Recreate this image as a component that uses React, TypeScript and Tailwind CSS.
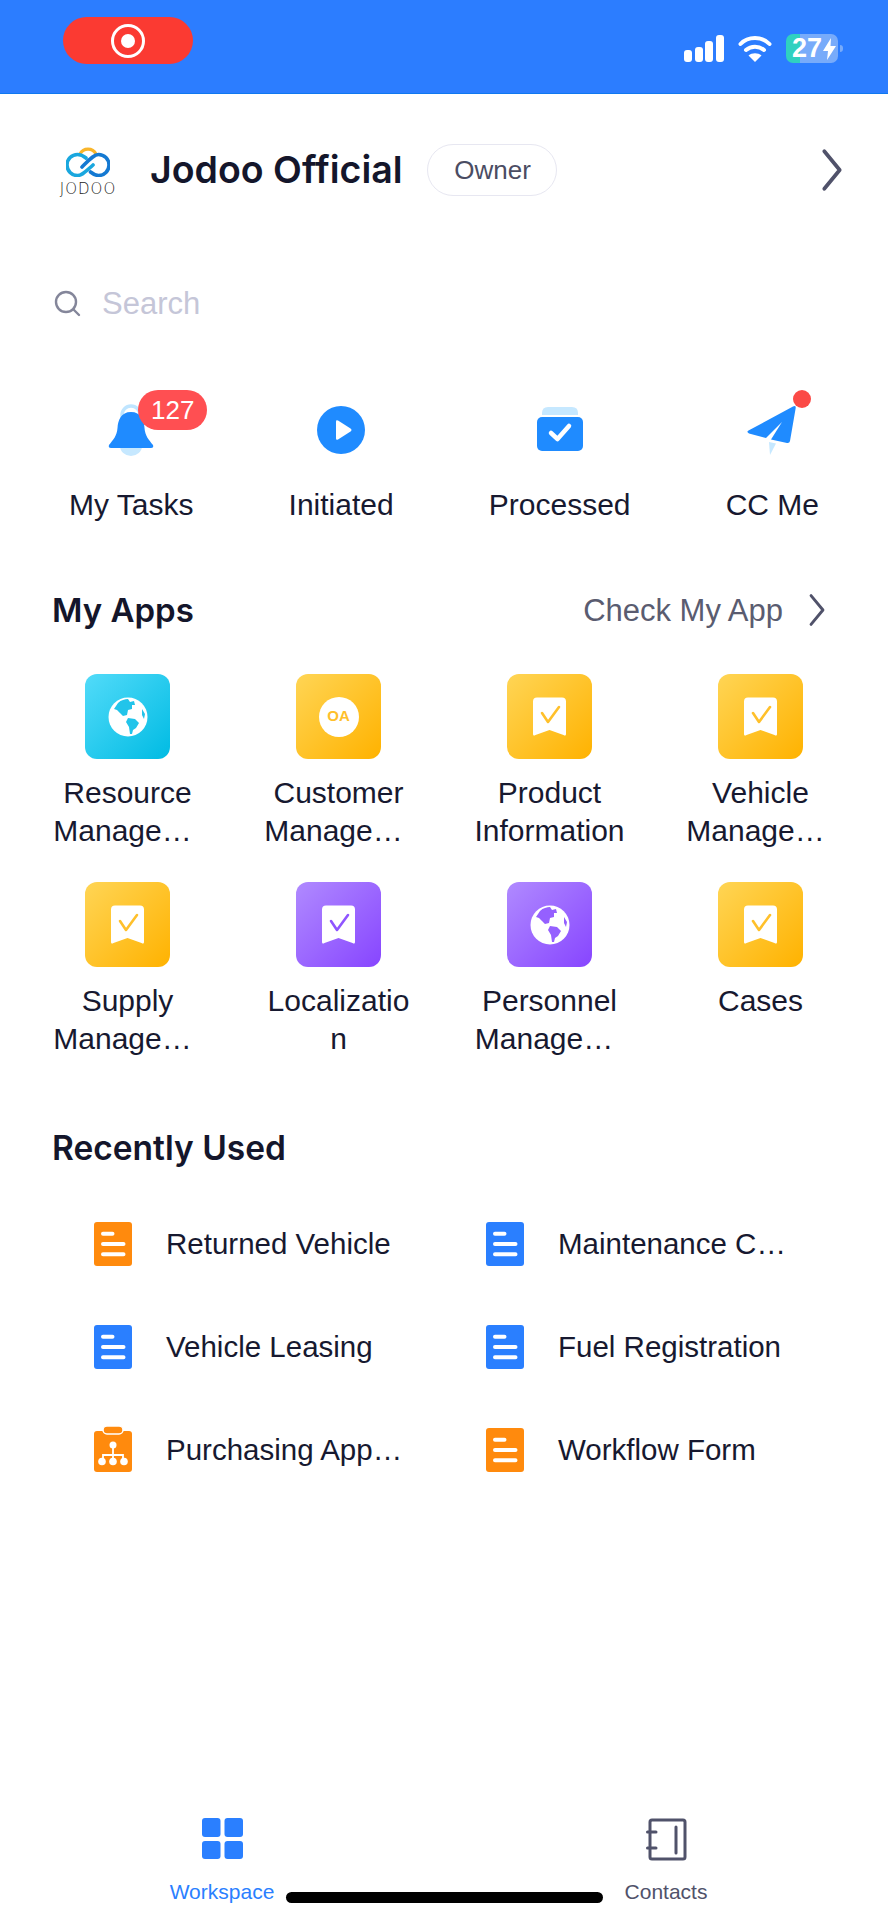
import React from "react";

const Chevron = ({ className }: { className: string }) => (
  <svg className={className} viewBox="0 0 20 40" fill="none">
    <path d="M3 3 L17 20 L3 37" stroke="#50526a" strokeWidth="3.4" strokeLinecap="round" strokeLinejoin="round" />
  </svg>
);

const Globe = ({ color }: { color: string }) => (
  <svg className="w-[40px] h-[40px]" viewBox="0 0 40 40">
    <circle cx="20" cy="20" r="19.5" fill="#fff" />
    <path
      d="M10 6 C13 3 17 2 20 2 L22 5 L26 4 L27 8 L24 8 L24 12 L20 13 L19 18 L15 19 L12 16 L9 13 L6 12 Z"
      fill={color}
    />
    <path d="M20 21 L27 22 L31 26 L28 31 L25 33 L24 37 L22 37 L21 30 L18 25 Z" fill={color} />
    <path d="M34 12 L37 17 L36 22 L34 18 Z" fill={color} />
  </svg>
);

const Bookmark = ({ color }: { color: string }) => (
  <svg className="w-[33px] h-[40px]" viewBox="0 0 33 40">
    <path
      d="M4 0.5 H29 a4 4 0 0 1 4 4 V37 q0 2.5 -2.5 1 L16.5 33 L2.5 38 q-2.5 1.5 -2.5 -1 V4.5 a4 4 0 0 1 4 -4 z"
      fill="#fff"
    />
    <path d="M9 16 L15 25 L26 10" fill="none" stroke={color} strokeWidth="2.6" strokeLinecap="round" strokeLinejoin="round" />
  </svg>
);

const DocIcon = ({ color }: { color: string }) => (
  <svg className="w-[38px] h-[44px]" viewBox="0 0 38 44">
    <rect width="38" height="44" rx="3" fill={color} />
    <path d="M9 11.7 H18.5 M9 22 H29.5 M9 32.3 H29.5" stroke="#fff" strokeWidth="4" strokeLinecap="round" />
  </svg>
);

const OrgIcon = () => (
  <svg className="w-[38px] h-[44px] overflow-visible" viewBox="0 0 38 44">
    <path d="M3 3 H35 a3 3 0 0 1 3 3 V41 a3 3 0 0 1 -3 3 H3 a3 3 0 0 1 -3 -3 V6 a3 3 0 0 1 3 -3 z" fill="#ff8a0d" />
    <rect x="9" y="-2" width="20" height="8" rx="4" fill="#ff8a0d" stroke="#fff" strokeWidth="1.5" />
    <path d="M19 18 V32 M9 32 V27 H29 V32" fill="none" stroke="#fff" strokeWidth="1.8" />
    <circle cx="19" cy="17" r="3.5" fill="#fff" />
    <circle cx="8" cy="33.5" r="3.8" fill="#fff" />
    <circle cx="19" cy="33.5" r="3.8" fill="#fff" />
    <circle cx="30" cy="33.5" r="3.8" fill="#fff" />
  </svg>
);

const gradients = {
  cyan: "bg-[linear-gradient(135deg,#52dbf9,#00bbe3)]",
  amber: "bg-[linear-gradient(135deg,#ffd555,#ffb200)]",
  purple: "bg-[linear-gradient(135deg,#b08aff,#8745ff)]",
};

const apps = [
  { tone: "cyan", kind: "globe", color: "#22c4ea", lines: ["Resource", "Manage…"], pad: "pr-[10px]" },
  { tone: "amber", kind: "oa", color: "#ffc02b", lines: ["Customer", "Manage…"], pad: "pr-[10px]" },
  { tone: "amber", kind: "mark", color: "#ffc02b", lines: ["Product", "Information"], pad: "" },
  { tone: "amber", kind: "mark", color: "#ffc02b", lines: ["Vehicle", "Manage…"], pad: "pr-[10px]" },
  { tone: "amber", kind: "mark", color: "#ffc02b", lines: ["Supply", "Manage…"], pad: "pr-[10px]" },
  { tone: "purple", kind: "mark", color: "#8f55ff", lines: ["Localizatio", "n"], pad: "" },
  { tone: "purple", kind: "globe", color: "#9560ff", lines: ["Personnel", "Manage…"], pad: "pr-[11px]" },
  { tone: "amber", kind: "mark", color: "#ffc02b", lines: ["Cases"], pad: "" },
] as const;

const recents = [
  { label: "Returned Vehicle", icon: <DocIcon color="#ff8a0d" /> },
  { label: "Maintenance C…", icon: <DocIcon color="#2a7fff" /> },
  { label: "Vehicle Leasing", icon: <DocIcon color="#2a7fff" /> },
  { label: "Fuel Registration", icon: <DocIcon color="#2a7fff" /> },
  { label: "Purchasing App…", icon: <OrgIcon /> },
  { label: "Workflow Form", icon: <DocIcon color="#ff8a0d" /> },
];

const App = () => {
  return (
    <div className="relative w-[888px] h-[1920px] bg-white overflow-hidden flex flex-col font-['Liberation_Sans',Arial,sans-serif] text-[#171930]">
      {/* status bar */}
      <div className="h-[94px] shrink-0 bg-[#2c7dff] border-b border-[#0f78f0] flex items-start">
        <div className="ml-[63px] mt-[17px] w-[130px] h-[47px] rounded-full bg-[#fb3a32] flex items-center justify-center">
          <div className="w-[34px] h-[34px] rounded-full border-[3px] border-white flex items-center justify-center">
            <div className="w-[14px] h-[14px] rounded-full bg-white" />
          </div>
        </div>
        <div className="ml-auto mr-[45px] mt-[34px] flex items-center gap-[14px]">
          <svg className="w-[40px] h-[27px]" viewBox="0 0 40 27" fill="#fff">
            <rect x="0" y="15" width="8" height="12" rx="3" />
            <rect x="11" y="12" width="8" height="15" rx="3" />
            <rect x="21" y="6" width="8" height="21" rx="3" />
            <rect x="32" y="0" width="8" height="27" rx="3" />
          </svg>
          <svg className="w-[34px] h-[27px]" viewBox="0 0 34 27" fill="none">
            <path d="M2.5 9 C10 1 24 1 31.5 9" stroke="#fff" strokeWidth="4" strokeLinecap="round" />
            <path d="M8 15 C13 10.5 21 10.5 26 15" stroke="#fff" strokeWidth="4" strokeLinecap="round" />
            <path d="M17 27 L10.5 20.5 C14 17.5 20 17.5 23.5 20.5 Z" fill="#fff" />
          </svg>
          <div className="flex items-center gap-[2px]">
            <div className="w-[52px] h-[29px] rounded-[7px] bg-[linear-gradient(90deg,#2fd1c0_27%,#78abfa_27%)] flex items-center pl-[6px] gap-[1px] text-white font-bold text-[27px] leading-none">
              <span>27</span>
              <svg className="w-[13px] h-[22px]" viewBox="0 0 13 22" fill="#fff">
                <path d="M8 0 L0 13 H5 L4 22 L13 8 H7.5 Z" />
              </svg>
            </div>
            <div className="w-[3px] h-[7px] rounded-r bg-[#78abfa]" />
          </div>
        </div>
      </div>

      {/* team header */}
      <div className="mt-[50px] h-[52px] pl-[60px] pr-[44px] flex items-center">
        <div className="w-[56px] flex flex-col items-center">
          <svg className="w-[44px] h-[33px]" viewBox="0 0 44 33" fill="none">
            <path d="M14 10 A9 9 0 0 1 30 10" stroke="#f9b52a" strokeWidth="3.2" />
            <path d="M20 14 C17 11.5 14 10.5 11.5 10.5 A10.5 10.5 0 0 0 11.5 31.5 C16 31.5 19 28 27 21" stroke="#1aa7de" strokeWidth="3.6" strokeLinecap="round" />
            <path d="M16 23 C24 15 28 10.5 32.5 10.5 A10.5 10.5 0 0 1 32.5 31.5 C29.5 31.5 27 30 24.5 28" stroke="#1479d2" strokeWidth="3.6" strokeLinecap="round" />
          </svg>
          <span className="mt-[5px] text-[15px] leading-[14px] tracking-[1px] font-['DejaVu_Sans',sans-serif] font-extralight text-[#222]">
            JODOO
          </span>
        </div>
        <h1 className="ml-[34px] font-['Inter',sans-serif] font-semibold text-[37.5px] leading-none whitespace-nowrap text-[#14162b]">
          Jodoo Official
        </h1>
        <span className="ml-[24px] w-[130px] h-[52px] rounded-full border-[1.5px] border-[#e7e7f1] flex items-center justify-center pl-[2px] text-[26px] text-[#4b4d63]">
          Owner
        </span>
        <Chevron className="ml-auto w-[24px] h-[44px]" />
      </div>

      {/* search */}
      <div className="mt-[87px] h-[40px] pl-[54px] flex items-center gap-[21px]">
        <svg className="w-[27px] h-[27px]" viewBox="0 0 27 27" fill="none">
          <circle cx="12" cy="12" r="10" stroke="#84869a" strokeWidth="2.4" />
          <path d="M19.5 19.5 L25 25" stroke="#84869a" strokeWidth="2.4" strokeLinecap="round" />
        </svg>
        <span className="text-[31px] leading-none text-[#c5c6d8]">Search</span>
      </div>

      {/* shortcuts */}
      <div className="mt-[67px] px-[69px] flex justify-between">
        <div className="flex flex-col items-center">
          <div className="relative h-[66px] w-[46px] flex items-end">
            <svg className="w-[46px] h-[53px]" viewBox="0 0 46 53">
              <circle cx="23" cy="12" r="9" fill="none" stroke="#bfe5ff" strokeWidth="3.5" />
              <ellipse cx="23" cy="43" rx="11" ry="10" fill="#c6e8ff" />
              <path d="M23 9 C13 9 10 17 9.5 25 C9 33 5 37 1 42 Q0 45 3 45 H43 Q46 45 45 42 C41 37 37 33 36.5 25 C36 17 33 9 23 9 Z" fill="#1f8bff" />
            </svg>
            <span className="absolute left-[30px] top-0 w-[69px] h-[40px] rounded-full bg-[#ff4f52] text-white text-[26px] leading-[40px] text-center">
              127
            </span>
          </div>
          <span className="mt-[29px] text-[30px] leading-[40px] whitespace-nowrap">My Tasks</span>
        </div>
        <div className="flex flex-col items-center">
          <div className="h-[66px] flex items-start pt-[16px]">
            <svg className="w-[48px] h-[48px]" viewBox="0 0 48 48">
              <circle cx="24" cy="24" r="24" fill="#1f8bff" />
              <path d="M19 15.5 Q19 13.5 21 14.5 L33.5 22.5 Q35.5 24 33.5 25.5 L21 33.5 Q19 34.5 19 32.5 Z" fill="#fff" />
            </svg>
          </div>
          <span className="mt-[29px] text-[30px] leading-[40px] whitespace-nowrap">Initiated</span>
        </div>
        <div className="flex flex-col items-center">
          <div className="h-[66px] flex items-start pt-[17px]">
            <svg className="w-[46px] h-[46px]" viewBox="0 0 46 46">
              <path d="M5 6 Q5 0 11 0 H35 Q41 0 41 6 V8 H5 Z" fill="#c6e8ff" />
              <rect x="0" y="10" width="46" height="34" rx="5" fill="#1f8bff" />
              <path d="M14 26 L20.5 32 L32 19" fill="none" stroke="#fff" strokeWidth="4.5" strokeLinecap="round" strokeLinejoin="round" />
            </svg>
          </div>
          <span className="mt-[29px] text-[30px] leading-[40px] whitespace-nowrap">Processed</span>
        </div>
        <div className="flex flex-col items-center">
          <div className="relative h-[66px] w-[50px] flex items-end">
            <svg className="w-[50px] h-[52px]" viewBox="0 0 50 52">
              <path d="M46 2.5 Q49 1 48.7 4 L43 37 Q42.5 39.5 40 39 L24 35.5 L35 18 L19 34 L2 29.5 Q-1 28 1.5 26.5 Z" fill="#1f8bff" />
              <path d="M22 38 L29 39.5 L23 51 Z" fill="#c6e8ff" />
            </svg>
            <span className="absolute left-[46px] top-0 w-[18px] h-[18px] rounded-full bg-[#fb4a46]" />
          </div>
          <span className="mt-[29px] text-[30px] leading-[40px] whitespace-nowrap">CC Me</span>
        </div>
      </div>

      {/* my apps */}
      <div className="mt-[65px] h-[40px] pl-[52px] pr-[62px] flex items-center">
        <h2 className="font-['Inter',sans-serif] font-semibold text-[33px] leading-none text-[#14162b]">My Apps</h2>
        <span className="ml-auto text-[31px] leading-none text-[#5a5c70]">Check My App</span>
        <Chevron className="ml-[25px] w-[18px] h-[34px]" />
      </div>

      <div className="mt-[44px] px-[22px] grid grid-cols-4 gap-y-[32px]">
        {apps.map((app, i) => (
          <div key={i} className="h-[176px] flex flex-col items-center">
            <div className={`w-[85px] h-[85px] rounded-[12px] flex items-center justify-center ${gradients[app.tone]}`}>
              {app.kind === "globe" && <Globe color={app.color} />}
              {app.kind === "mark" && <Bookmark color={app.color} />}
              {app.kind === "oa" && (
                <div className="w-[40px] h-[40px] rounded-full bg-white flex items-center justify-center text-[15px] font-bold text-[#ffc02b]">
                  OA
                </div>
              )}
            </div>
            <div className="mt-[15px] text-[30px] leading-[38px] text-center whitespace-nowrap">
              <div>{app.lines[0]}</div>
              {app.lines[1] && <div className={app.pad}>{app.lines[1]}</div>}
            </div>
          </div>
        ))}
      </div>

      {/* recently used */}
      <div className="mt-[71px] h-[40px] pl-[52px] flex items-center">
        <h2 className="font-['Inter',sans-serif] font-semibold text-[33.5px] leading-none text-[#14162b]">Recently Used</h2>
      </div>
      <div className="mt-[53px] pl-[94px] grid grid-cols-[392px_1fr] gap-y-[59px]">
        {recents.map((r) => (
          <div key={r.label} className="h-[44px] flex items-center gap-[34px]">
            {r.icon}
            <span className="text-[29.5px] leading-none whitespace-nowrap">{r.label}</span>
          </div>
        ))}
      </div>

      {/* tab bar */}
      <div className="mt-auto pb-[16px] grid grid-cols-2">
        <div className="flex flex-col items-center">
          <svg className="w-[41px] h-[41px]" viewBox="0 0 41 41" fill="#2a7fff">
            <rect x="0" y="0" width="18.5" height="19" rx="3" />
            <rect x="22.5" y="0" width="18.5" height="19" rx="3" />
            <rect x="0" y="23" width="18.5" height="18" rx="3" />
            <rect x="22.5" y="23" width="18.5" height="18" rx="3" />
          </svg>
          <span className="mt-[21px] text-[21px] leading-[24px] text-[#2a7fff]">Workspace</span>
        </div>
        <div className="flex flex-col items-center">
          <svg className="w-[41px] h-[43px]" viewBox="0 0 41 43" fill="none" stroke="#50526a" strokeWidth="3" strokeLinecap="round">
            <rect x="4" y="2" width="35" height="39" rx="2" />
            <path d="M1.5 14 H10 M1.5 30 H10 M30 9 V35" />
          </svg>
          <span className="mt-[19px] text-[21px] leading-[24px] text-[#50526a]">Contacts</span>
        </div>
      </div>

      <div className="absolute left-[286px] top-[1892px] w-[317px] h-[11px] rounded-full bg-black" />
    </div>
  );
};

export default App;
